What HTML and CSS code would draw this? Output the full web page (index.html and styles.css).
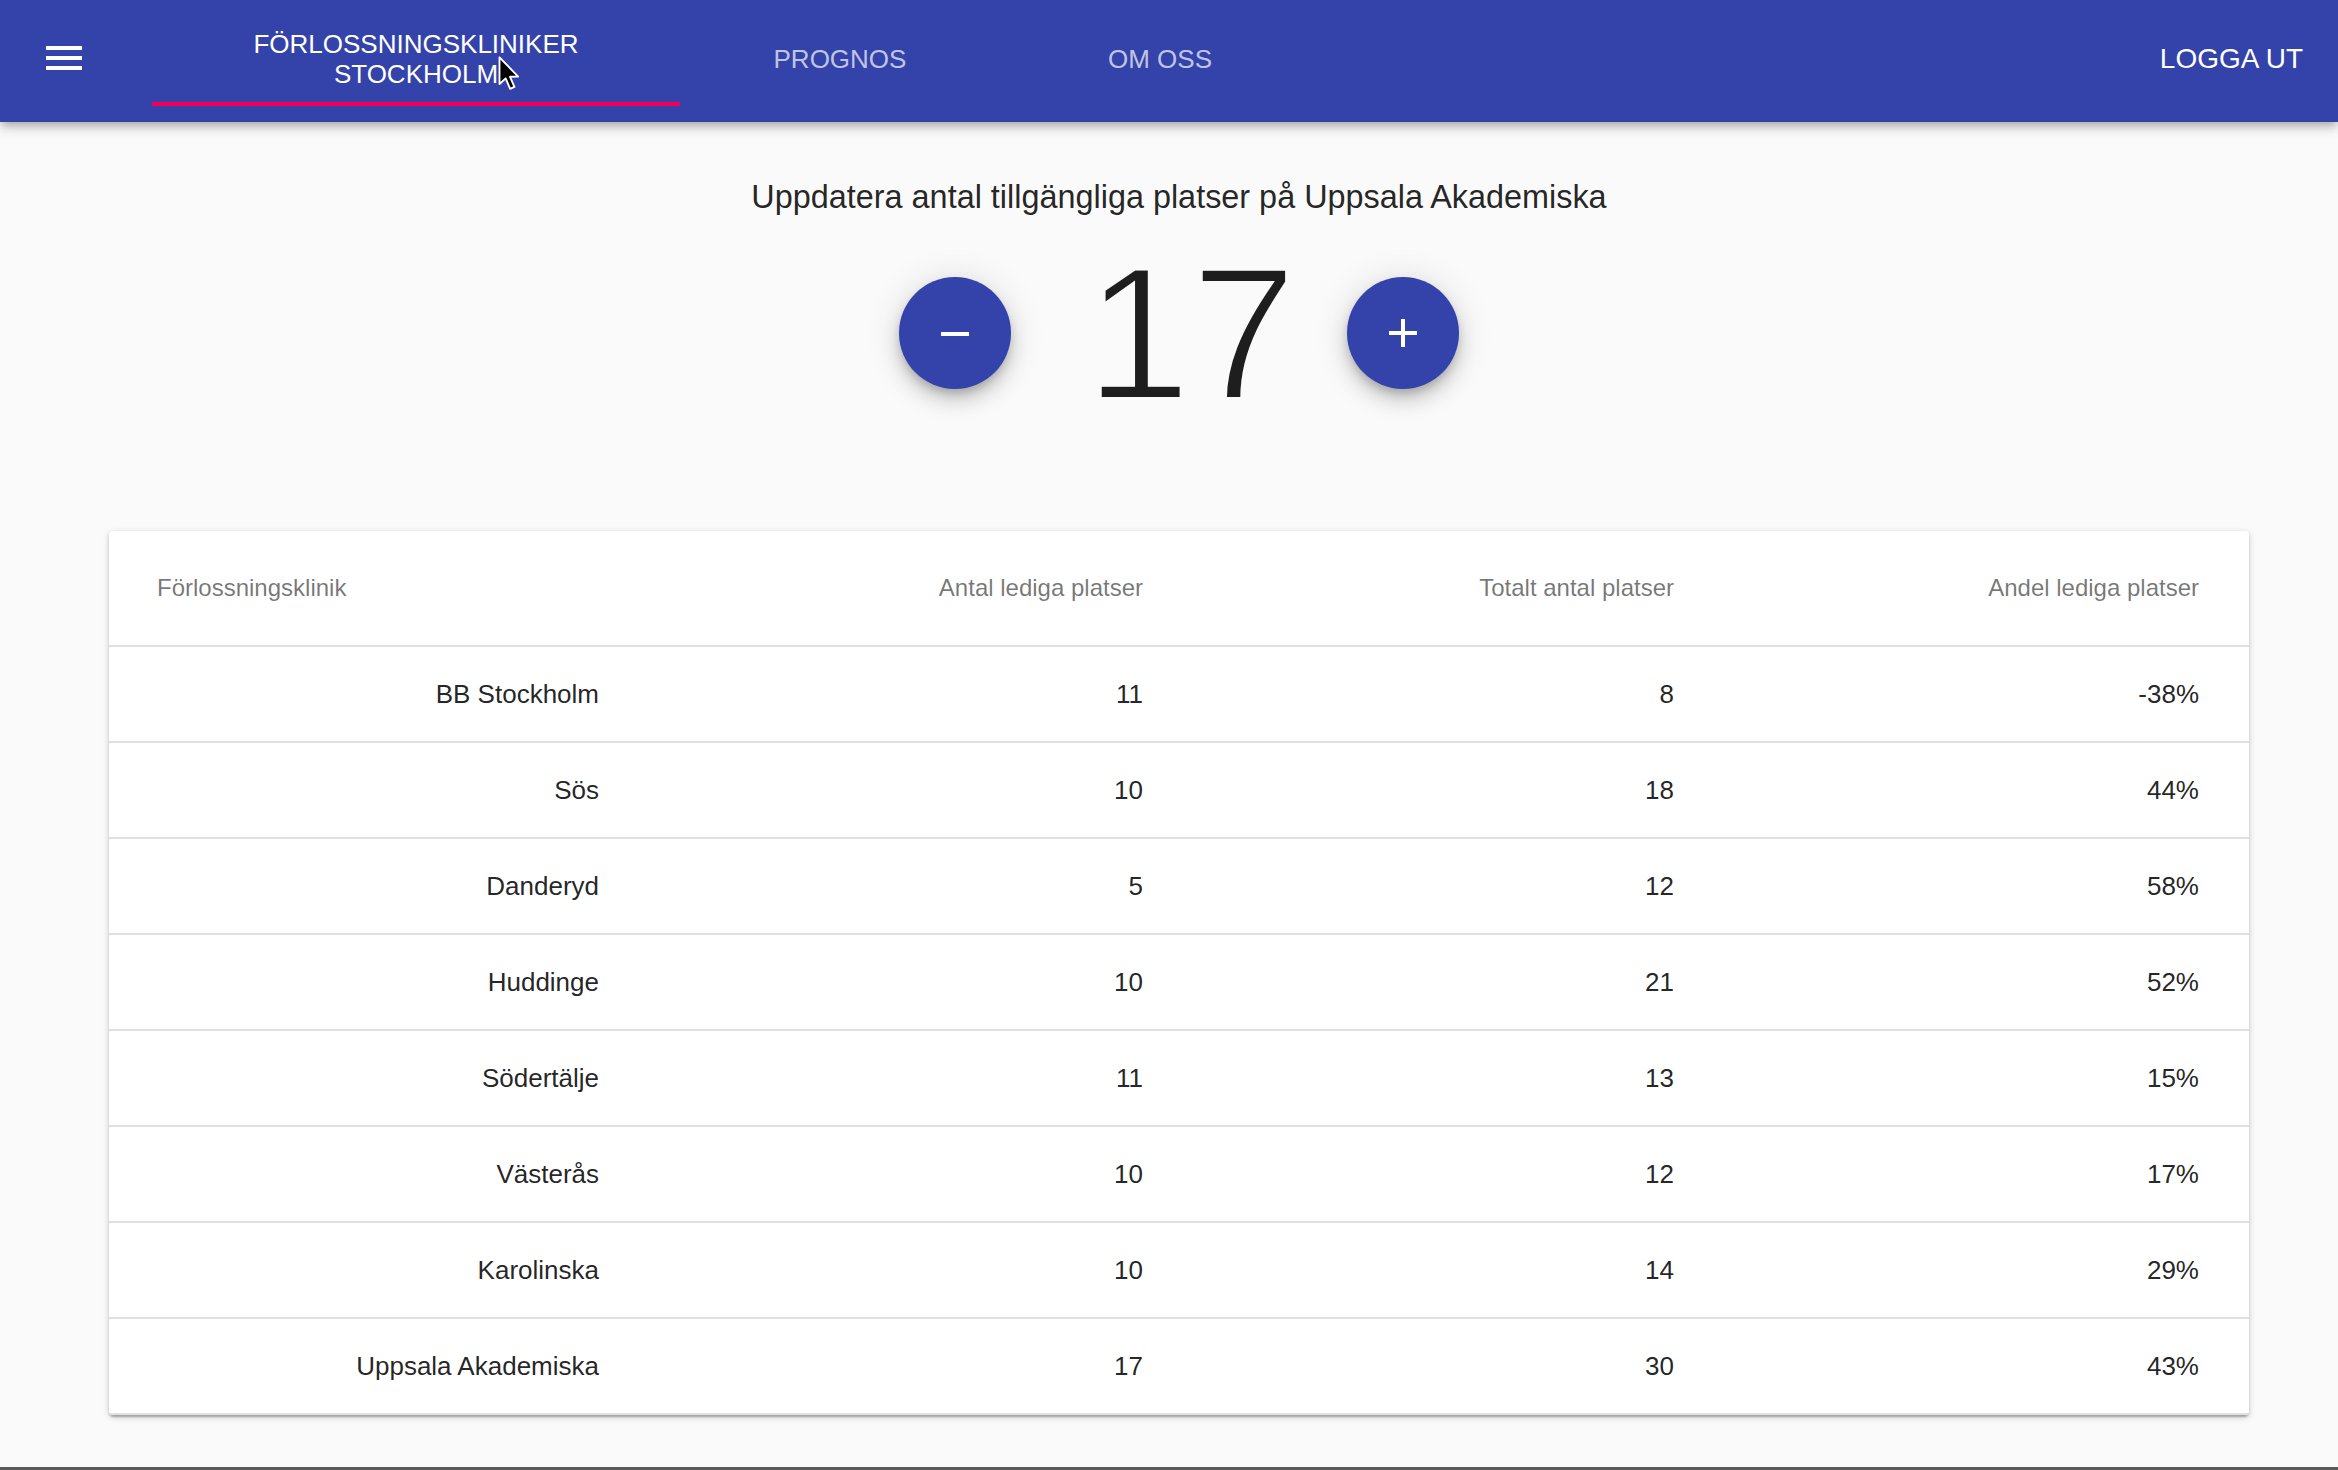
FILE: index.html
```html
<!DOCTYPE html>
<html lang="sv">
<head>
<meta charset="utf-8">
<title>Förlossningskliniker Stockholm</title>
<link rel="stylesheet" href="styles.css">
</head>
<body>
<header class="appbar">
  <button class="menu-btn" aria-label="Meny">
    <svg width="36" height="24" viewBox="0 0 36 24"><rect x="0" y="0" width="36" height="4" fill="#fff"/><rect x="0" y="10" width="36" height="4" fill="#fff"/><rect x="0" y="20" width="36" height="4" fill="#fff"/></svg>
  </button>
  <nav class="tabs">
    <a class="tab tab-wide active">FÖRLOSSNINGSKLINIKER<br>STOCKHOLM</a>
    <a class="tab">PROGNOS</a>
    <a class="tab">OM OSS</a>
  </nav>
  <button class="logout">LOGGA UT</button>
</header>

<svg class="cursor" width="23" height="36" viewBox="0 0 17 27"><path d="M1 1 L1 21 L5.6 16.8 L9 24.6 L12.2 23.2 L8.9 15.6 L15 15.4 Z" fill="#000" stroke="#fff" stroke-width="1.4" stroke-linejoin="round"/></svg>

<main class="content">
  <h1 class="title">Uppdatera antal tillgängliga platser på Uppsala Akademiska</h1>
  <div class="counter">
    <button class="fab" aria-label="Minska">
      <svg width="28" height="28" viewBox="0 0 28 28"><rect x="0" y="13" width="28" height="4" fill="#fff"/></svg>
    </button>
    <span class="count">17</span>
    <button class="fab" aria-label="Öka">
      <svg width="28" height="28" viewBox="0 0 28 28"><rect x="0" y="12" width="28" height="4" fill="#fff"/><rect x="12" y="0" width="4" height="28" fill="#fff"/></svg>
    </button>
  </div>

  <div class="card">
    <table class="grid">
      <colgroup><col class="c1"><col class="c2"><col class="c3"><col class="c4"></colgroup>
      <thead>
        <tr><th class="left">Förlossningsklinik</th><th>Antal lediga platser</th><th>Totalt antal platser</th><th>Andel lediga platser</th></tr>
      </thead>
      <tbody>
        <tr><td>BB Stockholm</td><td>11</td><td>8</td><td>-38%</td></tr>
        <tr><td>Sös</td><td>10</td><td>18</td><td>44%</td></tr>
        <tr><td>Danderyd</td><td>5</td><td>12</td><td>58%</td></tr>
        <tr><td>Huddinge</td><td>10</td><td>21</td><td>52%</td></tr>
        <tr><td>Södertälje</td><td>11</td><td>13</td><td>15%</td></tr>
        <tr><td>Västerås</td><td>10</td><td>12</td><td>17%</td></tr>
        <tr><td>Karolinska</td><td>10</td><td>14</td><td>29%</td></tr>
        <tr><td>Uppsala Akademiska</td><td>17</td><td>30</td><td>43%</td></tr>
      </tbody>
    </table>
  </div>
</main>
<div class="edge"></div>
</body>
</html>
```
FILE: styles.css
```css
html, body {
  margin: 0;
  padding: 0;
}
body {
  background: #fafafa;
  font-family: "Liberation Sans", Arial, Helvetica, sans-serif;
  color: rgba(0, 0, 0, 0.87);
  min-height: 1470px;
  display: flex;
  flex-direction: column;
  position: relative;
  overflow: hidden;
}

/* App bar */
.appbar {
  display: flex;
  height: 122px;
  flex: none;
  background: #3343a9;
  box-shadow: 0 4px 8px -2px rgba(0,0,0,0.25), 0 8px 10px 0 rgba(0,0,0,0.12);
  position: relative;
  z-index: 2;
}
.menu-btn {
  align-self: flex-start;
  margin: 46px 0 0 46px;
  width: 36px;
  height: 24px;
  padding: 0;
  border: 0;
  background: none;
  display: block;
}
.menu-btn svg { display: block; }
.tabs {
  display: flex;
  align-self: flex-start;
  margin: 10px 0 0 70px;
}
.tab {
  box-sizing: border-box;
  width: 320px;
  height: 96px;
  padding-top: 6px;
  border-bottom: 4px solid transparent;
  display: flex;
  align-items: center;
  justify-content: center;
  text-align: center;
  font-size: 26px;
  line-height: 30px;
  color: rgba(255, 255, 255, 0.7);
  text-decoration: none;
}
.tab-wide { width: 528px; }
.tab.active {
  color: #fff;
  border-bottom-color: #f50057;
}
.logout {
  margin: 0 35px 4px auto;
  align-self: center;
  padding: 0;
  border: 0;
  background: none;
  font-family: inherit;
  font-size: 28px;
  line-height: 30px;
  color: #fff;
}

.cursor {
  position: absolute;
  left: 498px;
  top: 56px;
  z-index: 5;
}

/* Content */
.content {
  margin-left: 109px;
  width: 2140px;
}
.title {
  margin: 51px 0 0;
  font-size: 32.4px;
  line-height: 48px;
  font-weight: 400;
  text-align: center;
  color: rgba(0, 0, 0, 0.87);
}
.counter {
  display: flex;
  justify-content: center;
  align-items: center;
  gap: 62px;
  height: 190px;
  margin-top: 17px;
}
.count {
  font-size: 190px;
  line-height: 190px;
  color: #1e1e1e;
  margin: 0 -12px 0 12px;
  -webkit-text-stroke: 4px #fafafa;
  paint-order: normal;
}
.fab {
  width: 112px;
  height: 112px;
  border-radius: 50%;
  border: 0;
  padding: 0;
  background: #3343a9;
  display: flex;
  align-items: center;
  justify-content: center;
  box-shadow: 0 6px 10px -2px rgba(0,0,0,0.2), 0 12px 20px 0 rgba(0,0,0,0.14), 0 2px 36px 0 rgba(0,0,0,0.12);
}
.fab svg { display: block; }

.card {
  margin-top: 103px;
  background: #fff;
  border-radius: 4px;
  box-shadow: 0 2px 6px rgba(0,0,0,0.2), 0 2px 2px rgba(0,0,0,0.14), 0 4px 2px -2px rgba(0,0,0,0.12);
  overflow: hidden;
}
.grid {
  width: 2140px;
  table-layout: fixed;
  border-collapse: separate;
  border-spacing: 0;
}
.c1 { width: 602px; }
.c2 { width: 544px; }
.c3 { width: 531px; }
.c4 { width: 463px; }
.grid th,
.grid td {
  box-sizing: border-box;
  padding: 0 112px 0 48px;
  border-bottom: 2px solid #e0e0e0;
  text-align: right;
  white-space: nowrap;
}
.grid th:last-child,
.grid td:last-child {
  padding-right: 50px;
}
.grid th {
  height: 116px;
  font-size: 24px;
  font-weight: 400;
  color: rgba(0, 0, 0, 0.54);
}
.grid th.left { text-align: left; }
.grid td {
  height: 96px;
  font-size: 26px;
  color: rgba(0, 0, 0, 0.87);
}

.edge {
  margin-top: auto;
  height: 3px;
  background: #5a5a5a;
  flex: none;
}
```
